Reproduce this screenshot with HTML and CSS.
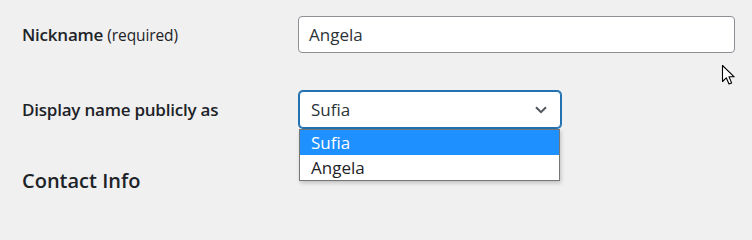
FILE: index.html
```html
<!DOCTYPE html>
<html lang="en">
<head>
<meta charset="utf-8">
<title>Profile</title>
<link rel="stylesheet" href="styles.css">
</head>
<body>
<div class="form">
  <div class="row row-nick">
    <div class="label">Nickname <span class="req">(required)</span></div>
    <div class="field">
      <div class="input">Angela</div>
    </div>
  </div>
  <div class="row row-display">
    <div class="label">Display name publicly as</div>
    <div class="field select-wrap">
      <div class="select">
        <span>Sufia</span>
        <svg class="chev" width="12" height="8" viewBox="0 0 12 8"><path d="M1 1.2 L6 6.2 L11 1.2" fill="none" stroke="#50575e" stroke-width="2"/></svg>
      </div>
      <ul class="dropdown">
        <li class="opt sel">Sufia</li>
        <li class="opt">Angela</li>
      </ul>
    </div>
  </div>
  <h2 class="heading">Contact Info</h2>
</div>
<svg class="cursor" width="16" height="24" viewBox="0 0 16 24"><path d="M1.5 1.5 L1.5 17.5 L5.3 13.8 L8 20 L10.6 18.9 L8 12.8 L13.2 12.8 Z" fill="#fff" stroke="#000" stroke-width="1.1" stroke-linejoin="round"/></svg>
</body>
</html>
```
FILE: styles.css
```css
html, body {
  margin: 0;
  padding: 0;
  background: #f0f0f1;
}
body {
  font-family: "Open Sans", "Noto Sans", sans-serif;
  color: #1d2327;
  width: 752px;
  height: 215px;
  overflow: hidden;
  position: relative;
}
.form {
  padding: 16px 0 0 22px;
}
.row {
  display: flex;
  align-items: center;
}
.row-display {
  margin-top: 38px;
}
.label {
  width: 276px;
  flex: none;
  font-size: 17px;
  font-weight: 600;
  letter-spacing: -0.22px;
}
.req {
  font-size: 15.5px;
  font-weight: 400;
  letter-spacing: -0.1px;
}
.field {
  flex: none;
}
.input {
  box-sizing: border-box;
  width: 437px;
  height: 37px;
  border: 1px solid #8c8f94;
  border-radius: 4px;
  background: #fff;
  font-size: 17px;
  line-height: 35px;
  padding: 0 10px;
  color: #2c3338;
}
.select-wrap {
  position: relative;
}
.select {
  box-sizing: border-box;
  width: 262px;
  height: 37px;
  margin-left: 1px;
  border: 1px solid #2271b1;
  box-shadow: 0 0 0 1px #2271b1;
  border-radius: 4px;
  background: #fff;
  font-size: 17px;
  line-height: 35px;
  padding: 0 13px 0 11px;
  display: flex;
  justify-content: space-between;
  align-items: center;
  color: #2c3338;
}
.chev {
  display: block;
}
.dropdown {
  position: absolute;
  left: 1px;
  top: 38px;
  width: 261px;
  margin: 0;
  padding: 0;
  list-style: none;
  background: #fff;
  border: 1px solid #767676;
  box-sizing: border-box;
  box-shadow: 1px 2px 4px rgba(0,0,0,0.2);
}
.opt {
  font-size: 17px;
  line-height: 25px;
  height: 25px;
  padding: 0 11px;
  color: #1d2327;
}
.opt.sel {
  background: #1e90ff;
  color: #fff;
}
.heading {
  margin: 40px 0 0;
  font-size: 20px;
  font-weight: 600;
  line-height: 1.3;
}
.cursor {
  position: absolute;
  left: 721px;
  top: 64px;
}
```
